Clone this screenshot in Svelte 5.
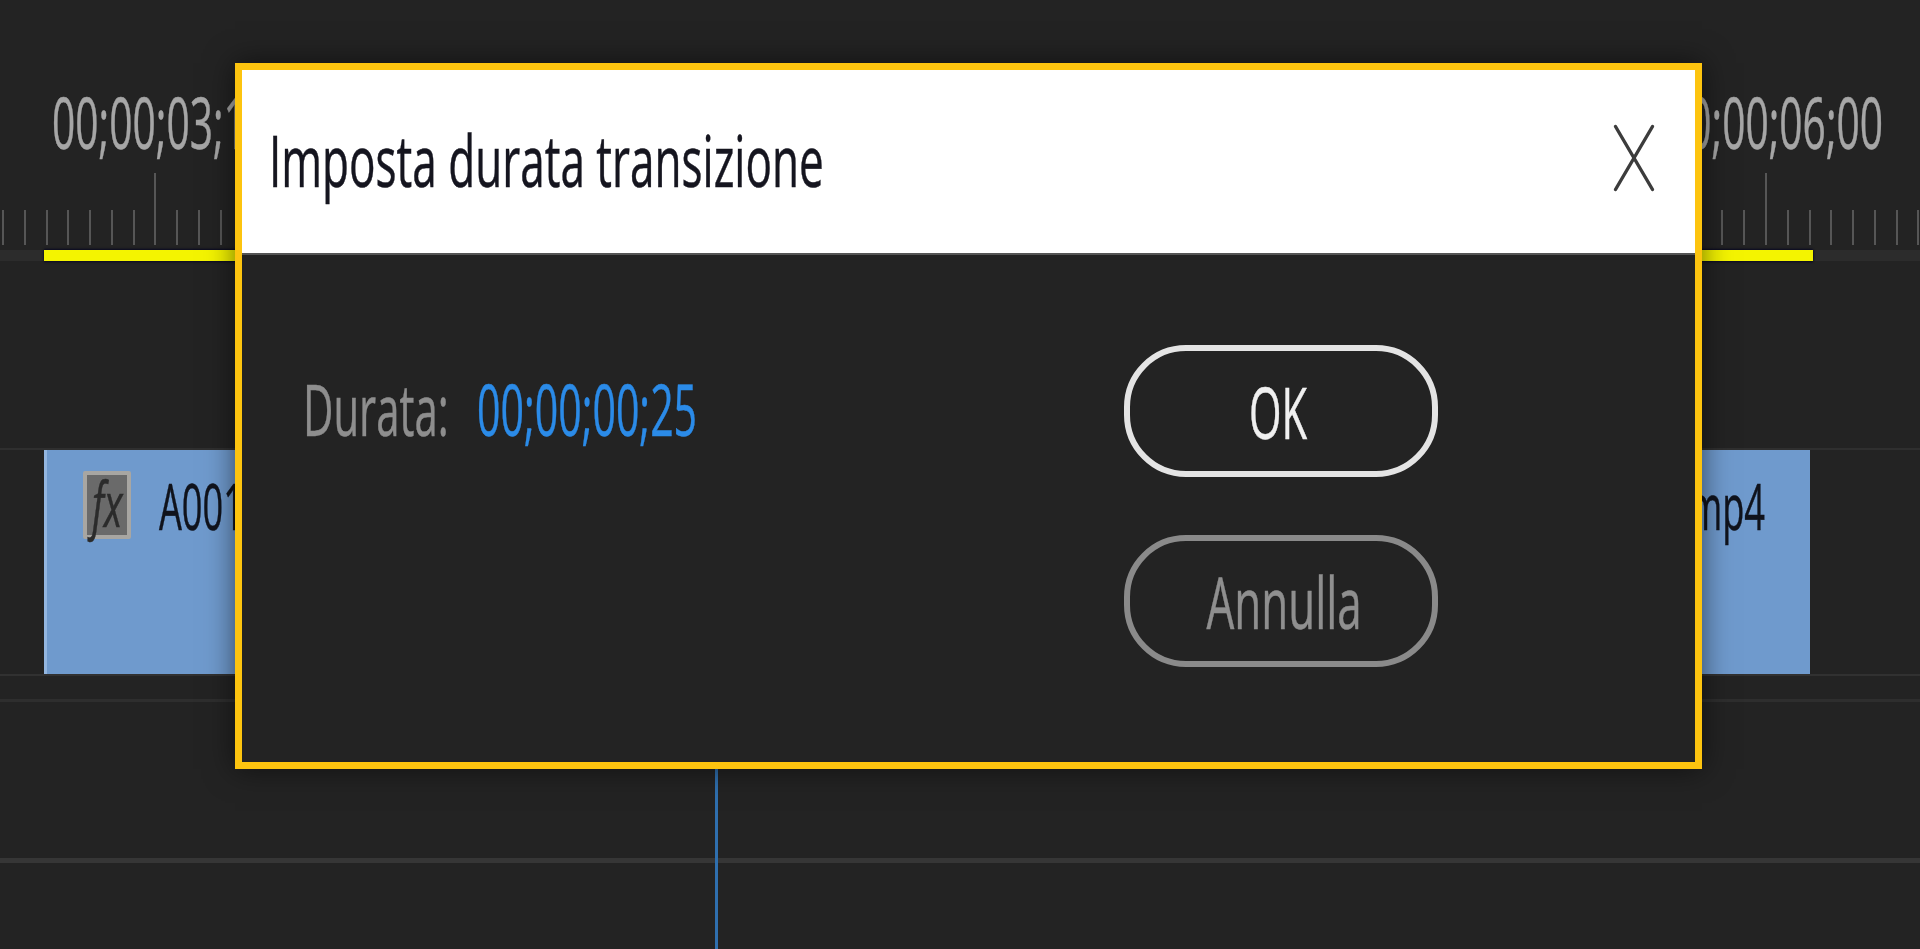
<script>
  const ticks = Array.from({ length: 89 }, (_, i) => i);
  const isMajor = (i) => i % 74 === 7;
</script>

<div class="timeline">
  <div class="times">
    <span class="squeeze tc left">00;00;03;15</span>
    <span class="squeeze tc right">00;00;06;00</span>
  </div>
  <div class="ruler">
    {#each ticks as i}
      <i class="tick" class:major={isMajor(i)}></i>
    {/each}
  </div>
  <div class="workarea"><div class="yellow"></div></div>

  <div class="video-track">
    <div class="clip">
      <div class="fx"><span class="squeeze">fx</span></div>
      <span class="squeeze clip-name">A001</span>
      <span class="squeeze clip-ext">mp4</span>
    </div>
  </div>
  <div class="track-line second"></div>
  <div class="track-line third"></div>
</div>

<div class="playhead"></div>

<div class="dialog">
  <header>
    <h1 class="squeeze title">Imposta durata transizione</h1>
    <svg class="close" width="42" height="68" viewBox="0 0 42 68" fill="none" stroke="#3c3c3c" stroke-width="3.4" stroke-linecap="round">
      <path d="M2.5 2.5 39.5 65.5"/>
      <path d="M39.5 2.5 2.5 65.5"/>
    </svg>
  </header>
  <div class="body">
    <div class="field">
      <span class="squeeze label">Durata:</span>
      <span class="squeeze value">00;00;00;25</span>
    </div>
    <div class="buttons">
      <button class="ok"><span class="squeeze mid">OK</span></button>
      <button class="cancel"><span class="squeeze mid">Annulla</span></button>
    </div>
  </div>
</div>

<style>
  :global(body) {
    margin: 0;
    background: #232323;
    overflow: hidden;
    font-family: "Open Sans", "Liberation Sans", sans-serif;
    -webkit-text-stroke: 0.5px currentColor;
  }

  .squeeze {
    display: inline-block;
    white-space: nowrap;
    transform: scaleX(0.565);
    transform-origin: left center;
  }
  .squeeze.mid {
    transform-origin: center;
  }

  .timeline {
    height: 949px;
    overflow: hidden;
  }

  .times {
    height: 173px;
    display: flex;
    justify-content: space-between;
    padding: 0 37px 0 52px;
  }
  .tc {
    font-size: 72px;
    line-height: 98px;
    height: 98px;
    margin-top: 72px;
    color: #a6a6a6;
  }
  .tc.right {
    transform-origin: right center;
  }

  .ruler {
    height: 72px;
    display: flex;
    align-items: flex-end;
    gap: 19.78px;
    padding-left: 2px;
  }
  .tick {
    flex: none;
    width: 2px;
    height: 35px;
    background: #565656;
  }
  .tick.major {
    height: 72px;
  }

  .workarea {
    margin-top: 5px;
    height: 11px;
    background: #2c2c2c;
  }
  .yellow {
    height: 11px;
    margin: 0 107px 0 44px;
    background: #f4f400;
    box-shadow: 0 1px 2px #0a0a24, 0 -1px 2px #0a0a24;
  }

  .video-track {
    margin-top: 187px;
    border-top: 2px solid #2f2f2f;
    border-bottom: 2px solid #313131;
  }
  .clip {
    height: 224px;
    margin: 0 110px 0 44px;
    box-sizing: border-box;
    background: #6f9acd;
    border-left: 3px solid #93b6e0;
    padding: 21px 45px 0 36px;
    display: flex;
    align-items: flex-start;
  }
  .fx {
    flex: none;
    width: 48px;
    height: 68px;
    box-sizing: border-box;
    background: #6a6a6a;
    border: 4px solid #a8a6a2;
    border-radius: 2px;
    color: #2b2b2b;
    font-size: 62px;
    font-style: italic;
    line-height: 56px;
    padding-left: 5px;
  }
  .fx span {
    transform: scaleX(0.62);
  }
  .clip-name,
  .clip-ext {
    font-size: 64px;
    line-height: 70px;
    color: #10131c;
  }
  .clip-name {
    margin-left: 28px;
  }
  .clip-ext {
    margin-left: auto;
    transform-origin: right center;
  }

  .track-line {
    height: 3px;
    background: #2e2e2e;
  }
  .second {
    margin-top: 23px;
  }
  .third {
    margin-top: 156px;
    height: 5px;
    background: #363636;
  }

  .playhead {
    position: absolute;
    left: 715px;
    top: 758px;
    bottom: 0;
    width: 3px;
    background: #2f6fae;
  }

  .dialog {
    position: absolute;
    left: 235px;
    top: 63px;
    width: 1467px;
    height: 706px;
    box-sizing: border-box;
    border: 7px solid #fdc40f;
    background: #232323;
    box-shadow: 0 0 28px rgba(0, 0, 0, 0.55);
  }
  header {
    height: 185px;
    box-sizing: border-box;
    background: #fff;
    border-bottom: 2px solid #555;
    padding: 0 40px 0 27px;
    display: flex;
    align-items: center;
    justify-content: space-between;
  }
  .title {
    margin: -5px 0 0;
    font-size: 72px;
    font-weight: 400;
    line-height: 98px;
    color: #15151f;
    transform: scaleX(0.612);
  }
  .close {
    flex: none;
    margin-top: -8px;
  }

  .body {
    display: flex;
    justify-content: space-between;
    padding: 90px 257px 0 61px;
  }
  .field {
    display: flex;
    margin-top: 14px;
    font-size: 72px;
    line-height: 98px;
  }
  .label {
    width: 174px;
    color: #8e8e8e;
    transform: scaleX(0.582);
  }
  .value {
    color: #2b8be8;
    transform: scaleX(0.57);
  }

  .buttons {
    display: flex;
    flex-direction: column;
    gap: 58px;
  }
  button {
    width: 314px;
    height: 132px;
    box-sizing: border-box;
    border-radius: 62px;
    background: transparent;
    font: inherit;
    font-size: 72px;
    line-height: 98px;
    padding: 0;
    display: flex;
    align-items: center;
    justify-content: center;
  }
  .ok {
    border: 6px solid #e4e4e4;
    color: #f0f0f0;
    padding-right: 6px;
  }
  .ok span {
    transform: scaleX(0.58);
  }
  .cancel {
    border: 6px solid #8a8a8a;
    color: #8f8f8f;
    padding-left: 6px;
  }
  .cancel span {
    transform: scaleX(0.61);
  }
</style>
